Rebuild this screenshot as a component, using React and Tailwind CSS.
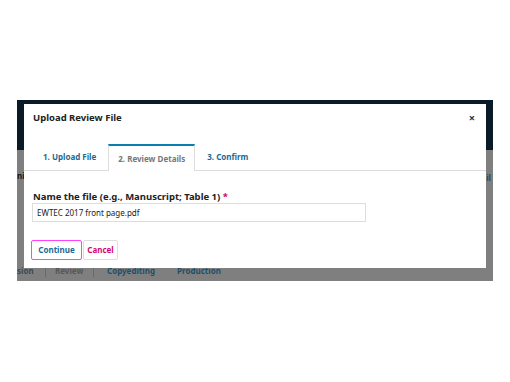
import React from 'react';

const font = { fontFamily: '"Noto Sans", "Open Sans", sans-serif' };

function Tab({ label, active }) {
    return active ? (
        <div className="h-[27px] px-[9px] flex items-center border-t-2 border-x border-t-[#0a7fb0] border-x-[#ddd] bg-white -mb-px text-[#777] font-bold text-[8px]">
            {label}
        </div>
    ) : (
        <div className="h-[27px] px-[12px] flex items-center text-[#1b6a94] font-bold text-[8px]">{label}</div>
    );
}

export default function App() {
    return (
        <div className="w-[510px] h-[382px] bg-white pt-[100px] pl-[17px]" style={font}>
            <div className="relative w-[476px] h-[181px] bg-[#7f7f7f] flex flex-col">
                <div className="h-[50px] bg-[#0a1a26]" />
                <div className="flex-1 relative">
                    <span className="absolute left-0 top-[20px] text-[8px] font-bold text-[#1a1a1a]">ni</span>
                    <span className="absolute right-[2px] top-[22px] text-[8px] font-bold text-[#1d4f6a]">il</span>
                </div>
                <div className="h-[19px] flex items-center text-[8px] font-bold text-[#3a4a55] mb-[1px]">
                    <span className="w-[28px]">sion</span>
                    <span className="border-l border-[#6a6a6a] pl-[9px] w-[48px] text-[#585858]">Review</span>
                    <span className="border-l border-[#6a6a6a] pl-[13px] w-[84px] text-[#1d4f6a]">Copyediting</span>
                    <span className="text-[#1d4f6a]">Production</span>
                </div>

                <div className="absolute left-[7px] top-[4px] w-[462px] h-[164px] bg-white flex flex-col">
                    <div className="h-[39px] flex items-start justify-between pt-[8px] pl-[9px] pr-[11px]">
                        <span className="text-[9.5px] font-bold text-[#222] leading-[12px]">Upload Review File</span>
                        <span className="text-[11px] font-bold text-[#333] leading-[12px]">×</span>
                    </div>
                    <div className="flex items-end border-b border-[#ddd] pl-[7px]">
                        <Tab label="1. Upload File" />
                        <Tab label="2. Review Details" active />
                        <Tab label="3. Confirm" />
                    </div>
                    <div className="pl-[9px] pt-[20px]">
                        <div className="text-[9.5px] font-bold text-[#222] leading-[12px]">
                            Name the file (e.g., Manuscript; Table 1) <span className="text-[#d00a6c]">*</span>
                        </div>
                        <div className="w-[334px] h-[19px] border border-[#ddd] flex items-center px-[4px] text-[8px] text-[#222] -ml-[1px]">
                            EWTEC 2017 front page.pdf
                        </div>
                        <div className="mt-[18px] flex gap-[1px] -ml-[2px]">
                            <div className="h-[20px] w-[51px] border border-[#ff40ff] rounded-[2px] flex items-center justify-center text-[8px] font-bold text-[#1b6a94]">Continue</div>
                            <div className="h-[20px] w-[35px] border border-[#ddd] rounded-[2px] flex items-center justify-center text-[8px] font-bold text-[#d00a6c]">Cancel</div>
                        </div>
                    </div>
                </div>
            </div>
        </div>
    );
}
